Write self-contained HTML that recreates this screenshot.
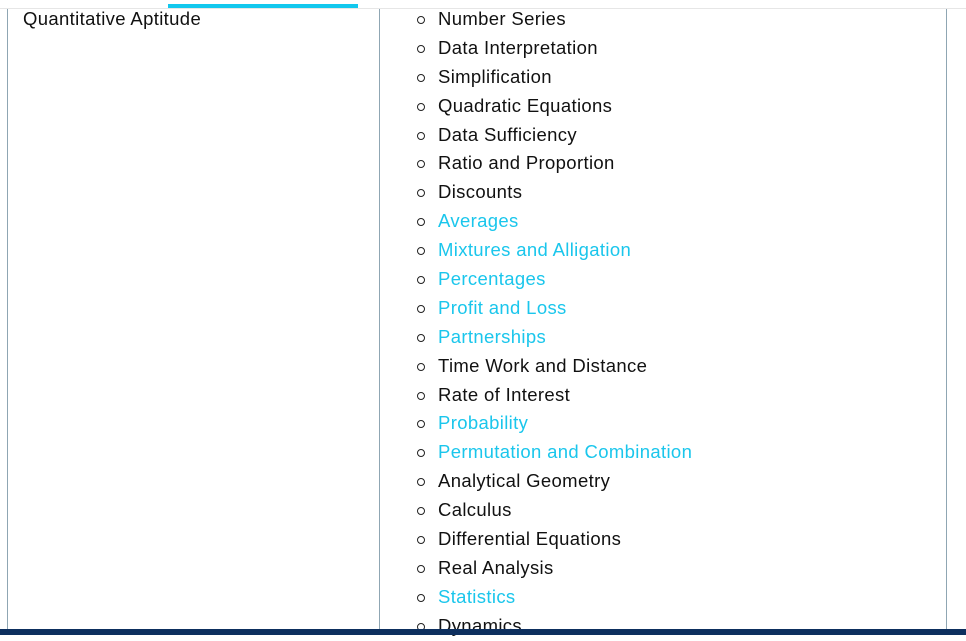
<!DOCTYPE html>
<html><head><style>
body{margin:0;width:966px;height:635px;overflow:hidden;background:#fff;font-family:"Liberation Sans",sans-serif;font-size:18.5px;letter-spacing:0.35px;color:#111;position:relative}
.top{position:absolute;left:0;right:0;top:8px;border-top:1px solid #e6e6e6}
.bar{position:absolute;left:168px;top:4px;width:190px;height:4px;background:#12c8ee}
.v{position:absolute;top:9px;bottom:0;width:1px;background:#8fa6b3}
.l{position:absolute;left:23px;top:8px}
ul{position:absolute;left:438px;top:5px;margin:0;padding:0;list-style:none}
li{height:28.9px;line-height:28px;position:relative;white-space:nowrap}
li:before{content:"";position:absolute;left:-21px;top:11px;width:6px;height:6px;border:1.5px solid #222;border-radius:50%}
.c{color:#1ac6ec}
.nav{position:absolute;left:0;right:0;top:629px;height:6px;background:#0d2f5e}
</style></head><body>
<div class="top"></div><div class="bar"></div>
<div class="v" style="left:7px"></div><div class="v" style="left:379px"></div><div class="v" style="left:946px"></div>
<div class="l">Quantitative Aptitude</div>
<ul>
<li>Number Series</li><li>Data Interpretation</li><li>Simplification</li><li>Quadratic Equations</li><li>Data Sufficiency</li><li>Ratio and Proportion</li><li>Discounts</li>
<li class="c">Averages</li><li class="c">Mixtures and Alligation</li><li class="c">Percentages</li><li class="c">Profit and Loss</li><li class="c">Partnerships</li>
<li>Time Work and Distance</li><li>Rate of Interest</li>
<li class="c">Probability</li><li class="c">Permutation and Combination</li>
<li>Analytical Geometry</li><li>Calculus</li><li>Differential Equations</li><li>Real Analysis</li>
<li class="c">Statistics</li><li>Dynamics</li>
</ul>
<div class="nav"></div>
</body></html>
